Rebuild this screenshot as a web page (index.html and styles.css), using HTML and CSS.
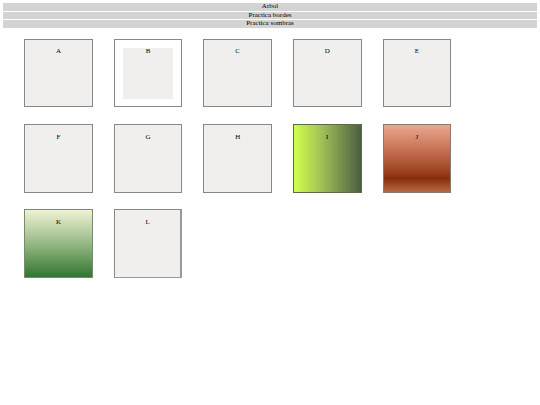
FILE: index.html
```html
<!DOCTYPE html>
<html>
<head>
<meta charset="utf-8">
<link rel="stylesheet" href="styles.css">
</head>
<body>
<div class="bars">
  <div class="bar">Arbol</div>
  <div class="bar">Practica bordes</div>
  <div class="bar">Practica sombras</div>
</div>
<div class="grid">
  <div class="box">A</div>
  <div class="box box-b"><div class="inner">B</div></div>
  <div class="box">C</div>
  <div class="box">D</div>
  <div class="box">E</div>
  <div class="box">F</div>
  <div class="box">G</div>
  <div class="box">H</div>
  <div class="box box-i">I</div>
  <div class="box box-j">J</div>
  <div class="box box-k">K</div>
  <div class="box box-l">L</div>
</div>
</body>
</html>
```
FILE: styles.css
```css
html, body {
  background: #ffffff;
}
body {
  margin: 3.4px;
  font-family: "Liberation Serif", "Times New Roman", serif;
  font-size: 7px;
  color: #000;
}
.bars {
  display: flex;
  flex-direction: column;
  gap: 0.85px;
}
.bar {
  background: #d3d3d3;
  height: 7.6px;
  line-height: 7.6px;
  text-align: center;
}
.grid {
  display: grid;
  grid-template-columns: repeat(5, 68.6px);
  column-gap: 21px;
  row-gap: 16.6px;
  padding-left: 20.8px;
  margin-top: 11px;
}
.box {
  box-sizing: border-box;
  width: 68.6px;
  height: 68.6px;
  border: 1px solid #888;
  background: #f0efee;
  text-align: center;
  padding-top: 8.5px;
  line-height: 7px;
}
.box-b {
  background: #ffffff;
  padding: 8px;
}
.box-b .inner {
  background: #f0efee;
  height: 100%;
  padding-top: 0.5px;
}
.box-i {
  background: linear-gradient(to right, #d2ff4a 0%, #a3c257 40%, #4b5f42 100%);
  border-color: #5a6a4a;
}
.box-j {
  background: linear-gradient(to bottom, #eaa890 0%, #c87458 35%, #a3492a 65%, #882e0c 80%, #b86844 100%);
  border-color: #8a7a72;
}
.box-k {
  background: linear-gradient(to bottom, #eff2d2 0%, #a9c497 40%, #6f9e62 70%, #317631 100%);
  border-color: #7a8a72;
}
.box-l {
  border-right: 2px solid #9a9a9a;
  border-bottom: 1.5px solid #9a9a9a;
}
```
